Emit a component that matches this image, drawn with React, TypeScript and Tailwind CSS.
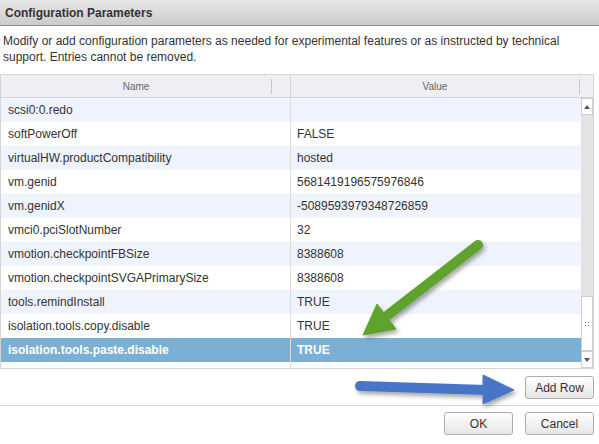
import React from 'react'

interface ParamRow {
  name: string
  value: string
}

const rows: ParamRow[] = [
  { name: 'scsi0:0.redo', value: '' },
  { name: 'softPowerOff', value: 'FALSE' },
  { name: 'virtualHW.productCompatibility', value: 'hosted' },
  { name: 'vm.genid', value: '5681419196575976846' },
  { name: 'vm.genidX', value: '-5089593979348726859' },
  { name: 'vmci0.pciSlotNumber', value: '32' },
  { name: 'vmotion.checkpointFBSize', value: '8388608' },
  { name: 'vmotion.checkpointSVGAPrimarySize', value: '8388608' },
  { name: 'tools.remindInstall', value: 'TRUE' },
  { name: 'isolation.tools.copy.disable', value: 'TRUE' },
  { name: 'isolation.tools.paste.disable', value: 'TRUE' },
]

const SELECTED = 10

const Button: React.FC<{ label: string; className?: string }> = ({ label, className = '' }) => (
  <button
    className={`h-[23px] w-[69px] rounded-[3px] border border-[#adadad] bg-gradient-to-b from-white to-[#e6e6e6] text-[12px] text-[#333] ${className}`}
  >
    {label}
  </button>
)

const ScrollBar: React.FC = () => (
  <div className="flex w-[12px] flex-col bg-[#e3e3e3]">
    <div className="flex h-[17px] items-center justify-center border border-[#cfcfcf] bg-white">
      <div className="h-0 w-0 border-x-[3px] border-b-[4px] border-x-transparent border-b-[#555]" />
    </div>
    <div className="flex-1" />
    <div className="flex h-[55px] items-center justify-center border border-[#cfcfcf] bg-white">
      <div className="grid grid-cols-2 gap-[2px]">
        <span className="h-[1px] w-[1px] bg-[#777]" />
        <span className="h-[1px] w-[1px] bg-[#777]" />
        <span className="h-[1px] w-[1px] bg-[#777]" />
        <span className="h-[1px] w-[1px] bg-[#777]" />
      </div>
    </div>
    <div className="flex h-[17px] items-center justify-center border border-[#cfcfcf] bg-white">
      <div className="h-0 w-0 border-x-[3px] border-t-[4px] border-x-transparent border-t-[#555]" />
    </div>
  </div>
)

const Arrows: React.FC = () => (
  <svg className="pointer-events-none absolute inset-0" width={599} height={444}>
    <defs>
      <filter id="shadow" x="-20%" y="-20%" width="140%" height="140%">
        <feDropShadow dx="2" dy="3" stdDeviation="2" floodColor="#000" floodOpacity="0.35" />
      </filter>
    </defs>
    <g filter="url(#shadow)" fill="#5fa32d" stroke="#5fa32d">
      <line x1={478} y1={245} x2={388} y2={315} strokeWidth={10} strokeLinecap="round" />
      <polygon points="363,335 377,304 396,329" strokeWidth={1} strokeLinejoin="round" />
    </g>
    <g filter="url(#shadow)" fill="#4a75c8" stroke="#4a75c8">
      <line x1={360} y1={386} x2={486} y2={390} strokeWidth={10} strokeLinecap="round" />
      <polygon points="514,390 483,375 483,404" strokeWidth={1} strokeLinejoin="round" />
    </g>
  </svg>
)

export default function App() {
  return (
    <div className="relative h-[444px] w-[599px] overflow-hidden bg-white font-['Liberation_Sans',Arial,sans-serif] text-[#333]">
      <div className="flex h-[26px] items-center border-b border-[#8c8c8c] bg-gradient-to-b from-[#e8e8e8] to-[#cbcbcb] px-[5px] text-[12px] font-bold text-[#333]">
        Configuration Parameters
      </div>

      <p className="mt-[7px] px-[3px] text-[12px] leading-[16px]">
        Modify or add configuration parameters as needed for experimental features or as instructed by technical
        support. Entries cannot be removed.
      </p>

      <div className="mt-[9px] w-[594px] border border-[#d4d4d4]">
        <div className="flex h-[23px] border-b border-[#d4d4d4] bg-[#eeeff5] text-[10px] text-[#666]">
          <div className="flex w-[290px] items-center border-r border-[#d4d4d4]">
            <span className="flex-1 text-center">Name</span>
            <span className="mr-[18px] h-[15px] w-[1px] bg-[#c8c8c8]" />
          </div>
          <div className="flex w-[289px] items-center">
            <span className="flex-1 text-center">Value</span>
            <span className="h-[15px] w-[1px] bg-[#c8c8c8]" />
          </div>
          <div className="flex-1" />
        </div>

        <div className="flex h-[270px]">
          <div className="flex w-[580px] flex-col">
            {rows.map((row, i) => {
              const selected = i === SELECTED
              const bg = selected ? 'bg-[#7ab0d5] text-white font-bold' : i % 2 === 0 ? 'bg-[#eef3fd]' : 'bg-white'
              return (
                <div key={row.name} className={`flex h-[24px] text-[12px] ${bg}`}>
                  <div className="flex w-[290px] items-center border-r border-[#dcdcdc] pl-[7px]">{row.name}</div>
                  <div className="flex flex-1 items-center pl-[6px]">{row.value}</div>
                </div>
              )
            })}
            <div className="flex flex-1">
              <div className="w-[290px] border-r border-[#dcdcdc]" />
            </div>
          </div>
          <ScrollBar />
        </div>
      </div>

      <div className="mt-[7px] flex w-[594px] justify-end">
        <Button label="Add Row" />
      </div>

      <div className="mt-[6px] border-t border-[#d4d4d4]" />

      <div className="mt-[6px] flex w-[594px] justify-end gap-[12px]">
        <Button label="OK" />
        <Button label="Cancel" />
      </div>

      <Arrows />
    </div>
  )
}
